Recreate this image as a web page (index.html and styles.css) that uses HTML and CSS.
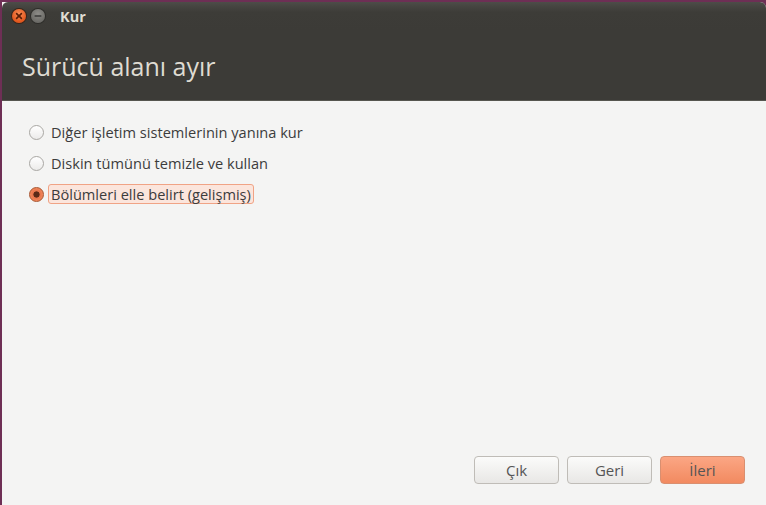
FILE: index.html
```html
<!DOCTYPE html>
<html lang="tr">
<head>
<meta charset="utf-8">
<title>Kur</title>
<link rel="stylesheet" href="styles.css">
</head>
<body>
<div class="window">
  <div class="titlebar">
    <div class="controls">
      <span class="wbtn close"><svg width="14" height="14" viewBox="0 0 14 14"><path d="M4.6 4.6 L9.4 9.4 M9.4 4.6 L4.6 9.4" stroke="#5a1e06" stroke-width="1.6" stroke-linecap="round"/></svg></span>
      <span class="wbtn min"><svg width="14" height="14" viewBox="0 0 14 14"><path d="M4.2 7 H9.8" stroke="#3a3a38" stroke-width="1.6" stroke-linecap="round"/></svg></span>
    </div>
    <span class="wtitle">Kur</span>
  </div>
  <div class="header">
    <h1 class="page-title">Sürücü alanı ayır</h1>
  </div>
  <div class="content">
    <div class="options">
      <label class="option"><span class="radio"></span><span class="label">Diğer işletim sistemlerinin yanına kur</span></label>
      <label class="option"><span class="radio"></span><span class="label">Diskin tümünü temizle ve kullan</span></label>
      <label class="option selected"><span class="radio on"></span><span class="label focus">Bölümleri elle belirt (gelişmiş)</span></label>
    </div>
    <div class="buttons">
      <button class="btn">Çık</button>
      <button class="btn">Geri</button>
      <button class="btn primary">İleri</button>
    </div>
  </div>
</div>
</body>
</html>
```
FILE: styles.css
```css
html, body {
  margin: 0;
  padding: 0;
  height: 100%;
}
body {
  background: #6e2f55;
  font-family: "Open Sans", "DejaVu Sans", sans-serif;
  overflow: hidden;
}
.window {
  margin: 2px 0 0 2px;
  height: 503px;
  display: flex;
  flex-direction: column;
  border-top-right-radius: 6px;
  overflow: hidden;
  background: #f4f4f3;
}
.titlebar {
  height: 28px;
  background: linear-gradient(#4d4c48, #3d3c38 10px, #3c3b37);
  display: flex;
  align-items: center;
  padding-left: 10px;
  border-top-left-radius: 6px;
}
.controls {
  display: flex;
  gap: 5px;
}
.wbtn {
  width: 14px;
  height: 14px;
  border-radius: 50%;
  display: flex;
}
.close {
  background: radial-gradient(circle at 50% 35%, #f58b55, #e2561c 70%);
  box-shadow: 0 0 0 1px #3a2418;
}
.min {
  background: radial-gradient(circle at 50% 35%, #8d8c88, #6c6b67 70%);
  box-shadow: 0 0 0 1px #2e2d2a;
}
.wtitle {
  margin-left: 15px;
  color: #dfdbd2;
  font-weight: bold;
  font-size: 14.5px;
  font-family: "Open Sans", "DejaVu Sans", sans-serif;
}
.header {
  height: 70px;
  background: #3c3b37;
  border-bottom: 1px solid #56554f;
  display: flex;
  align-items: center;
}
.page-title {
  margin: 0 0 0 20px;
  font-weight: normal;
  font-size: 25px;
  color: #dfdbd2;
  padding-top: 1px;
}
.content {
  flex: 1;
  display: flex;
  flex-direction: column;
  justify-content: space-between;
  background: #f4f4f3;
}
.options {
  display: flex;
  flex-direction: column;
  gap: 9px;
  padding: 20px 0 0 27px;
}
.option {
  display: flex;
  align-items: center;
  height: 22px;
  gap: 7px;
  font-size: 14.6px;
  line-height: 18px;
  color: #3c3c3c;
}
.radio {
  width: 15px;
  height: 15px;
  border-radius: 50%;
  box-sizing: border-box;
  border: 1px solid #a9a7a3;
  background: linear-gradient(#ffffff, #ecebea);
  flex: none;
}
.radio.on {
  border-color: #a9532c;
  background: radial-gradient(circle, #5b2a17 0 2.8px, #e7744b 3.4px, #f18a5f 7px);
}
.label {
  padding: 0 2px;
  border: 1px solid transparent;
  border-radius: 3px;
  margin-left: -3px;
}
.label.focus {
  border-color: #f0a385;
  background: #fbe5dc;
}
.buttons {
  display: flex;
  justify-content: flex-end;
  gap: 8px;
  padding: 0 21px 21px 0;
}
.btn {
  width: 85px;
  height: 28px;
  border: 1px solid #bfbcb7;
  border-radius: 4px;
  background: linear-gradient(#fbfbfa, #e8e7e5);
  color: #555555;
  font-family: "Open Sans", "DejaVu Sans", sans-serif;
  font-size: 15px;
  padding: 0;
}
.btn.primary {
  background: linear-gradient(#fba684, #f28a60);
  border-color: #d98f70;
  color: #555555;
}
```
